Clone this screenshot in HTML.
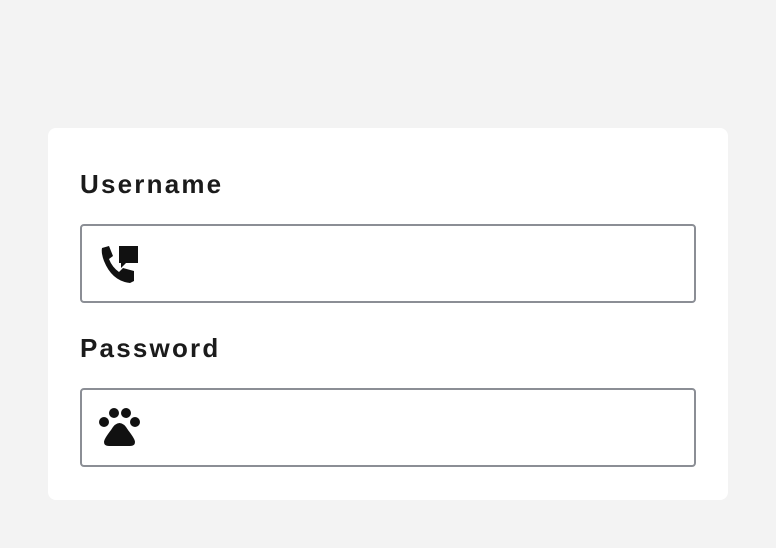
<!DOCTYPE html>
<html><head><style>
body{margin:0;width:776px;height:548px;background:#f3f3f3;font-family:"Liberation Sans",sans-serif;position:relative;overflow:hidden}
.card{position:absolute;left:48px;top:128px;width:680px;height:372px;background:#fff;border-radius:8px}
.lbl{position:absolute;left:80px;font-size:26px;font-weight:bold;color:#1b1b1b;letter-spacing:2.2px}
.inp{position:absolute;left:80px;width:612px;height:75px;border:2px solid #8b8e95;border-radius:4px;background:#fff}
svg{position:absolute}
</style></head><body>
<div class="card"></div>
<div class="lbl" style="top:169px">Username</div>
<div class="inp" style="top:224px"></div>
<svg style="left:100px;top:243px" width="40" height="40" viewBox="0 0 40 40">
<path d="M2 5 L9 3 L13 13 L9 16 Q12 24 19 29 L23 25 L34 28 L34 38 L30 40 Q12 38 4 18 Q1 10 2 5Z" fill="#111"/>
<path d="M19 3 L38 3 L38 20 L26 20 L21 25 L21 20 L19 20Z" fill="#111"/>
</svg>
<div class="lbl" style="top:333px">Password</div>
<div class="inp" style="top:388px"></div>
<svg style="left:98px;top:406px" width="44" height="42" viewBox="0 0 44 42">
<circle cx="6" cy="16" r="5" fill="#111"/>
<circle cx="16" cy="7" r="5" fill="#111"/>
<circle cx="28" cy="7" r="5" fill="#111"/>
<circle cx="37" cy="16" r="5" fill="#111"/>
<path d="M21.5 17 Q17 17 13 24 Q6 33 6 36 Q6 40 11 40 L32 40 Q37 40 37 36 Q37 33 30 24 Q26 17 21.5 17Z" fill="#111"/>
</svg>
</body></html>
